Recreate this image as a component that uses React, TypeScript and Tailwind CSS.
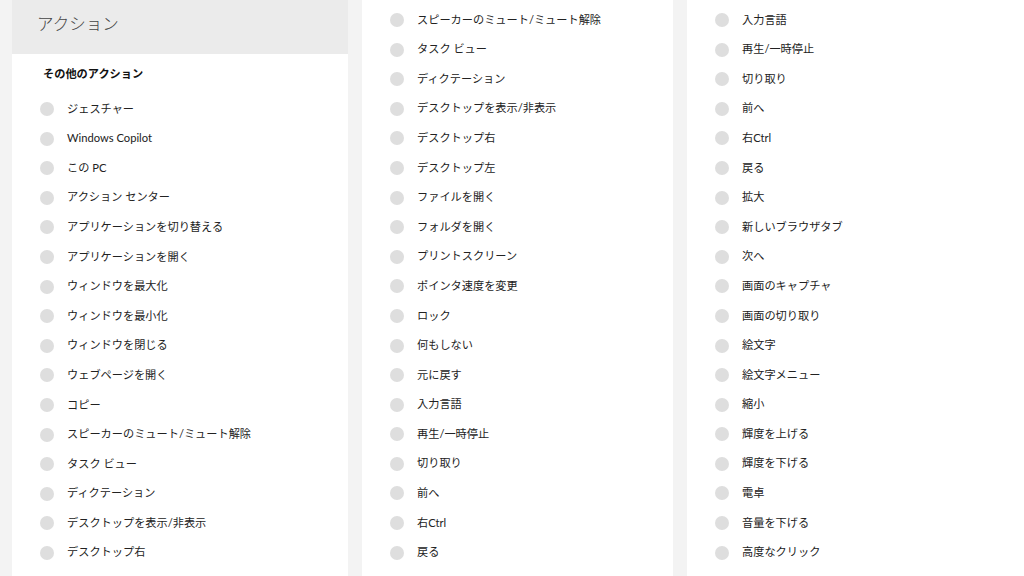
const COL1 = [
  "ジェスチャー", "Windows Copilot", "この PC", "アクション センター",
  "アプリケーションを切り替える", "アプリケーションを開く", "ウィンドウを最大化",
  "ウィンドウを最小化", "ウィンドウを閉じる", "ウェブページを開く", "コピー",
  "スピーカーのミュート/ミュート解除", "タスク ビュー", "ディクテーション",
  "デスクトップを表示/非表示", "デスクトップ右",
];
const COL2 = [
  "スピーカーのミュート/ミュート解除", "タスク ビュー", "ディクテーション",
  "デスクトップを表示/非表示", "デスクトップ右", "デスクトップ左", "ファイルを開く",
  "フォルダを開く", "プリントスクリーン", "ポインタ速度を変更", "ロック", "何もしない",
  "元に戻す", "入力言語", "再生/一時停止", "切り取り", "前へ", "右Ctrl", "戻る",
];
const COL3 = [
  "入力言語", "再生/一時停止", "切り取り", "前へ", "右Ctrl", "戻る", "拡大",
  "新しいブラウザタブ", "次へ", "画面のキャプチャ", "画面の切り取り", "絵文字",
  "絵文字メニュー", "縮小", "輝度を上げる", "輝度を下げる", "電卓", "音量を下げる",
  "高度なクリック",
];

function Option({ label }: { label: string }) {
  return (
    <div className="h-[29.6px] flex items-center">
      <span className="ml-[21px] w-[14px] h-[14px] rounded-full bg-[#dedede] shrink-0" />
      <span className="ml-[13px] text-[11.2px] text-[#222] whitespace-nowrap">{label}</span>
    </div>
  );
}

export default function App() {
  return (
    <div
      className="h-[576px] w-[1024px] overflow-hidden bg-[#f3f3f3] flex gap-[14px] pl-[12px]"
      style={{ fontFamily: 'Lato, "Noto Sans CJK JP", sans-serif' }}
    >
      <div className="w-[336px] h-full bg-white shrink-0">
        <div className="h-[54px] bg-[#ebebeb] flex items-center pl-[25px] pb-[5px]">
          <h1 className="text-[16.5px] font-light text-[#444]">アクション</h1>
        </div>
        <div className="pt-[12px] px-[31px] h-[37px] text-[11.2px] font-bold text-[#111]">その他のアクション</div>
        <div className="px-[7px] pt-[3.2px]">
          {COL1.map((l) => <Option key={l} label={l} />)}
        </div>
      </div>

      <div className="w-[311px] h-full bg-white shrink-0 px-[7px] pt-[5.2px]">
        {COL2.map((l) => <Option key={l} label={l} />)}
      </div>

      <div className="flex-1 h-full bg-white px-[7px] pt-[5.2px]">
        {COL3.map((l) => <Option key={l} label={l} />)}
      </div>
    </div>
  );
}
